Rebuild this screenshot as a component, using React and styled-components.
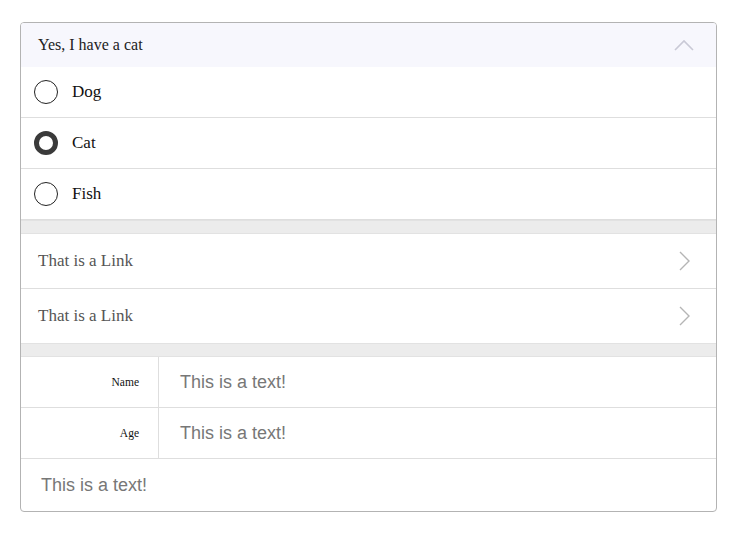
import React, { useState } from 'react';
import styled, { createGlobalStyle } from 'styled-components';

const GlobalStyle = createGlobalStyle`
  body {
    margin: 0;
    background: #fff;
    font-family: "Liberation Serif", "Times New Roman", serif;
  }
`;

function App() {
  const [pet, setPet] = useState('Cat');
  const pets = ['Dog', 'Cat', 'Fish'];

  return (
    <Page>
      <GlobalStyle />
      <Card>
        <Header>
          <HeaderTitle>Yes, I have a {pet.toLowerCase()}</HeaderTitle>
          <svg width="22" height="14" viewBox="0 0 22 14">
            <path d="M2 12 L11 3 L20 12" fill="none" stroke="#c9c9d6" strokeWidth="1.6" />
          </svg>
        </Header>
        {pets.map((p) => (
          <RadioRow key={p} onClick={() => setPet(p)}>
            <Radio checked={pet === p} />
            <RadioLabel>{p}</RadioLabel>
          </RadioRow>
        ))}
        <Spacer />
        <LinkRow>
          <LinkText>That is a Link</LinkText>
          <Chevron />
        </LinkRow>
        <LinkRow last>
          <LinkText>That is a Link</LinkText>
          <Chevron />
        </LinkRow>
        <Spacer />
        <FieldRow>
          <FieldLabel>Name</FieldLabel>
          <FieldValue>This is a text!</FieldValue>
        </FieldRow>
        <FieldRow>
          <FieldLabel>Age</FieldLabel>
          <FieldValue>This is a text!</FieldValue>
        </FieldRow>
        <TextRow>This is a text!</TextRow>
      </Card>
    </Page>
  );
}

function Chevron() {
  return (
    <svg width="14" height="22" viewBox="0 0 14 22">
      <path d="M2 2 L11 11 L2 20" fill="none" stroke="#b5b5b5" strokeWidth="1.4" />
    </svg>
  );
}

export default App;

const Page = styled.div`
  padding: 22px 20px;
`;

const Card = styled.div`
  width: 697px;
  box-sizing: border-box;
  border: 1px solid #b3b3b3;
  border-radius: 4px;
  overflow: hidden;
  background: #fff;
`;

const Header = styled.div`
  height: 44px;
  display: flex;
  align-items: center;
  justify-content: space-between;
  padding: 0 21px 0 17px;
  background: #f7f7fd;
`;

const HeaderTitle = styled.span`
  font-size: 16px;
  color: #222;
`;

const RadioRow = styled.div`
  height: 50px;
  display: flex;
  align-items: center;
  padding-left: 13px;
  border-bottom: 1px solid #dedede;
  cursor: pointer;
  &:last-of-type {
    border-bottom: none;
  }
`;

const Radio = styled.span`
  width: 24px;
  height: 24px;
  box-sizing: border-box;
  border-radius: 50%;
  border: ${(p) => (p.checked ? '5px solid #3a3a3a' : '1.5px solid #222')};
  background: #fff;
  margin-right: 14px;
`;

const RadioLabel = styled.span`
  font-size: 17px;
  color: #111;
`;

const Spacer = styled.div`
  height: 12px;
  background: #ececec;
  border-top: 1px solid #e2e2e2;
  border-bottom: 1px solid #e2e2e2;
`;

const LinkRow = styled.div`
  height: 54px;
  display: flex;
  align-items: center;
  justify-content: space-between;
  padding: 0 24px 0 17px;
  border-bottom: ${(p) => (p.last ? 'none' : '1px solid #dedede')};
  cursor: pointer;
`;

const LinkText = styled.span`
  font-size: 17px;
  color: #555;
`;

const FieldRow = styled.div`
  display: grid;
  grid-template-columns: 138px 1fr;
  height: 50px;
  border-bottom: 1px solid #dedede;
`;

const FieldLabel = styled.div`
  display: flex;
  align-items: center;
  justify-content: flex-end;
  padding-right: 19px;
  font-size: 11.5px;
  color: #111;
  border-right: 1px solid #dedede;
`;

const FieldValue = styled.div`
  display: flex;
  align-items: center;
  padding-left: 21px;
  font-family: "Liberation Sans", Arial, sans-serif;
  font-size: 18px;
  color: #777;
`;

const TextRow = styled.div`
  height: 52px;
  display: flex;
  align-items: center;
  padding-left: 20px;
  font-family: "Liberation Sans", Arial, sans-serif;
  font-size: 18px;
  color: #777;
`;
